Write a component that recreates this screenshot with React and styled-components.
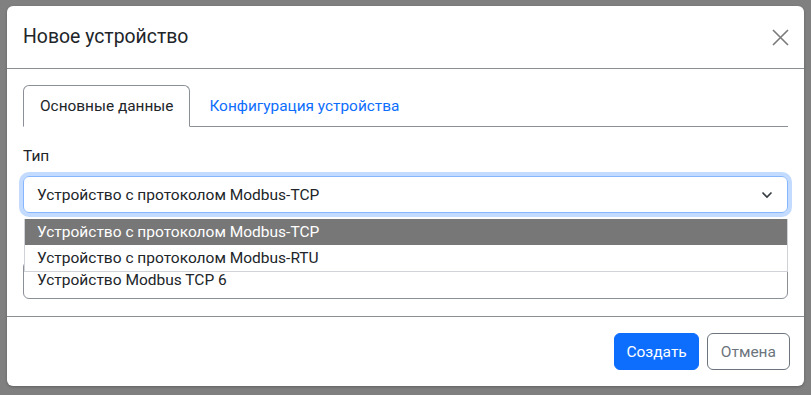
import React from 'react';
import styled, { createGlobalStyle } from 'styled-components';

const GlobalStyle = createGlobalStyle`
    html, body {
        margin: 0;
        padding: 0;
        height: 100%;
        background: #808080;
    }
    body {
        font-family: Roboto, "Noto Sans", sans-serif;
        color: #212529;
    }
`;

const Backdrop = styled.div`
    width: 811px;
    height: 395px;
    background: #808080;
    padding: 6px 7px 0 7px;
    box-sizing: border-box;
`;

const Modal = styled.div`
    background: #fff;
    border-radius: 6px;
    width: 797px;
    display: flex;
    flex-direction: column;
    box-shadow: 0 1px 3px rgba(0, 0, 0, .25);
`;

const Header = styled.div`
    display: flex;
    align-items: center;
    justify-content: space-between;
    height: 62px;
    padding: 0 15px 0 16px;
    border-bottom: 1px solid #8a9096;
`;

const Title = styled.h5`
    margin: 0;
    font-size: 19.4px;
    font-weight: 400;
    line-height: 1.2;
`;

const CloseButton = styled.button`
    border: 0;
    background: transparent;
    padding: 0;
    width: 18px;
    height: 18px;
    display: flex;
    align-items: center;
    justify-content: center;
    cursor: pointer;
`;

const Body = styled.div`
    padding: 16px 16px 17px 16px;
    display: flex;
    flex-direction: column;
`;

const Tabs = styled.div`
    display: flex;
    border-bottom: 1px solid #8a9096;
`;

const Tab = styled.button`
    height: 42px;
    margin-bottom: -1px;
    padding: 0 ${p => (p.$active ? 16 : 18)}px;
    font-family: inherit;
    font-size: 15.4px;
    background: ${p => (p.$active ? '#fff' : 'transparent')};
    cursor: pointer;
    border: 1px solid ${p => (p.$active ? '#8a9096' : 'transparent')};
    border-bottom-color: ${p => (p.$active ? '#fff' : 'transparent')};
    border-radius: 6px 6px 0 0;
    color: ${p => (p.$active ? '#212529' : '#0d6efd')};
`;

const Field = styled.div`
    position: relative;
    display: flex;
    flex-direction: column;
    margin-top: ${p => p.$top || 0}px;
`;

const Label = styled.label`
    font-size: 15.5px;
    line-height: 21px;
    margin-bottom: 9px;
`;

const SelectBox = styled.div`
    height: 35px;
    border: 1px solid #86b7fe;
    border-radius: 6px;
    box-shadow: 0 0 0 4px rgba(13, 110, 253, .25);
    display: flex;
    align-items: center;
    justify-content: space-between;
    padding: 0 14px 0 13px;
    font-size: 15.5px;
`;

const Input = styled.div`
    height: 36px;
    border: 1px solid #8a9096;
    border-radius: 6px;
    display: flex;
    align-items: center;
    padding: 0 13px;
    font-size: 15.5px;
`;

const Dropdown = styled.ul`
    position: absolute;
    left: 1px;
    right: 0;
    top: 73px;
    margin: 0;
    padding: 0;
    list-style: none;
    background: #fff;
    border: 1px solid #cfd2d6;
    border-top: 0;
    z-index: 2;
`;

const Option = styled.li`
    height: 26px;
    line-height: 26px;
    padding: 0 12px;
    font-size: 15.5px;
    background: ${p => (p.$selected ? '#777777' : '#fff')};
    color: ${p => (p.$selected ? '#fff' : '#212529')};
`;

const Footer = styled.div`
    display: flex;
    justify-content: flex-end;
    gap: 8px;
    padding: 16px 14px 16px 16px;
    border-top: 1px solid #8a9096;
`;

const Button = styled.button`
    height: 37px;
    padding: 0 ${p => (p.$primary ? 11 : 13)}px;
    font-family: inherit;
    font-size: 15.5px;
    border-radius: 6px;
    cursor: pointer;
    border: 1px solid ${p => (p.$primary ? '#0d6efd' : '#6c757d')};
    background: ${p => (p.$primary ? '#0d6efd' : '#fff')};
    color: ${p => (p.$primary ? '#fff' : '#6c757d')};
`;

const types = [
    'Устройство с протоколом Modbus-TCP',
    'Устройство с протоколом Modbus-RTU',
];

export default function App() {
    return (
        <>
            <GlobalStyle />
            <Backdrop>
                <Modal>
                    <Header>
                        <Title>Новое устройство</Title>
                        <CloseButton aria-label="Закрыть">
                            <svg width="17" height="17" viewBox="0 0 17 17">
                                <path d="M1 1L16 16M16 1L1 16" stroke="#7a7a7a" strokeWidth="1.6" />
                            </svg>
                        </CloseButton>
                    </Header>
                    <Body>
                        <Tabs>
                            <Tab $active>Основные данные</Tab>
                            <Tab>Конфигурация устройства</Tab>
                        </Tabs>
                        <Field $top={19}>
                            <Label>Тип</Label>
                            <SelectBox>
                                <span>{types[0]}</span>
                                <svg width="12" height="8" viewBox="0 0 12 8">
                                    <path d="M1.5 1.5L6 6L10.5 1.5" fill="none" stroke="#343a40" strokeWidth="1.6" />
                                </svg>
                            </SelectBox>
                            <Dropdown>
                                {types.map((t, i) => (
                                    <Option key={t} $selected={i === 0}>{t}</Option>
                                ))}
                            </Dropdown>
                        </Field>
                        {/* the name field's label sits under the open list */}
                        <Field $top={48}>
                            <Input aria-label="Название">Устройство Modbus TCP 6</Input>
                        </Field>
                    </Body>
                    <Footer>
                        <Button $primary>Создать</Button>
                        <Button>Отмена</Button>
                    </Footer>
                </Modal>
            </Backdrop>
        </>
    );
}
